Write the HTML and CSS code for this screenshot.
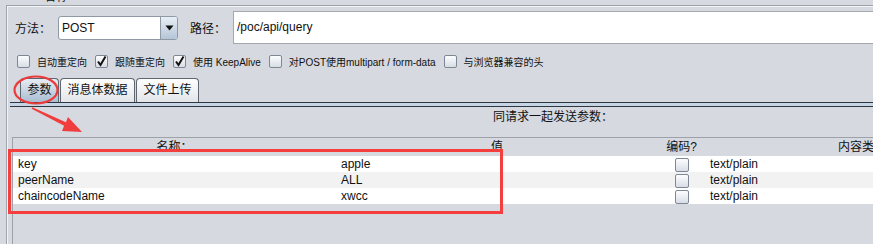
FILE: index.html
```html
<!DOCTYPE html>
<html lang="zh-CN">
<head>
  <meta charset="UTF-8">
  <title>HTTP请求</title>
  <link rel="stylesheet" href="styles.css">
</head>
<body>

  <div class="caption">名称</div>

  <div class="frame">

    <!-- Method / Path -->
    <div class="req-line">
      <span class="field-label">方法：</span>
      <div class="combo">
        <span class="combo-value">POST</span>
        <span class="combo-button">
          <svg width="9" height="6" viewBox="0 0 9 6"><polygon points="0.5,0.5 8.5,0.5 4.5,5.5" fill="#111"/></svg>
        </span>
      </div>
      <span class="field-label path-label">路径：</span>
      <div class="text-field">/poc/api/query</div>
    </div>

    <!-- Options -->
    <div class="options">
      <label class="option"><span class="check"></span>自动重定向</label>
      <label class="option"><span class="check"><svg width="11" height="11" viewBox="0 0 11 11"><path d="M2 5.5 L4.5 9 L9.5 0.5" fill="none" stroke="#111" stroke-width="2"/></svg></span>跟随重定向</label>
      <label class="option"><span class="check"><svg width="11" height="11" viewBox="0 0 11 11"><path d="M2 5.5 L4.5 9 L9.5 0.5" fill="none" stroke="#111" stroke-width="2"/></svg></span>使用 KeepAlive</label>
      <label class="option"><span class="check"></span>对POST使用multipart / form-data</label>
      <label class="option"><span class="check"></span>与浏览器兼容的头</label>
    </div>

    <!-- Tabs -->
    <div class="tabbed">
      <div class="tab-strip">
        <div class="tab selected">参数</div>
        <div class="tab">消息体数据</div>
        <div class="tab">文件上传</div>
      </div>
      <div class="tab-rule"></div>

      <div class="tab-body">
        <div class="params-title">同请求一起发送参数：</div>
        <div class="scroll-pane">
          <table class="params">
            <colgroup>
              <col class="col-name">
              <col class="col-value">
              <col class="col-enc">
              <col class="col-type">
            </colgroup>
            <thead>
              <tr>
                <th>名称：</th>
                <th>值</th>
                <th>编码?</th>
                <th>内容类型：</th>
              </tr>
            </thead>
            <tbody>
              <tr>
                <td>key</td>
                <td>apple</td>
                <td class="enc"><span class="check cell-check"></span></td>
                <td>text/plain</td>
              </tr>
              <tr>
                <td>peerName</td>
                <td>ALL</td>
                <td class="enc"><span class="check cell-check"></span></td>
                <td>text/plain</td>
              </tr>
              <tr>
                <td>chaincodeName</td>
                <td>xwcc</td>
                <td class="enc"><span class="check cell-check"></span></td>
                <td>text/plain</td>
              </tr>
            </tbody>
          </table>
        </div>
      </div>
    </div>

  </div>

  <!-- Annotation marks -->
  <svg class="marks" width="873" height="244" viewBox="0 0 873 244">
    <ellipse cx="36" cy="90" rx="21.5" ry="13.5" fill="none" stroke="#ec3b3b" stroke-width="2.2"/>
    <polygon points="32.4,107.2 65.9,122.2 68,117 82,132 62,131 64.1,125.8 31.6,108.8" fill="#f03e3e"/>
    <rect x="9.5" y="150.5" width="492" height="62" fill="none" stroke="#f53f3f" stroke-width="3"/>
  </svg>

</body>
</html>
```

FILE: styles.css
```css
body {
  margin: 0;
  width: 873px;
  height: 244px;
  overflow: hidden;
  position: relative;
  background: #d6d9df;
  font-family: "Liberation Sans", "Noto Sans CJK SC", sans-serif;
  font-size: 12px;
  color: #111;
}

/* cut-off caption above the frame */
.caption {
  height: 12px;
  line-height: 12px;
  margin: -9px 0 2px 44px;
}

.frame {
  margin-left: 6px;
  width: 1100px;
  height: 300px;
  border-top: 1px solid #9fa3aa;
  border-left: 1px solid #9fa3aa;
  box-shadow: inset 1px 1px 0 #f3f4f6;
}

/* Method / Path row */
.req-line {
  display: flex;
  align-items: center;
  height: 33px;
  margin-top: 5px;
  padding-left: 8px;
}

.field-label {
  width: 43px;
  flex: none;
}

.path-label {
  margin-left: 12px;
}

.combo {
  display: flex;
  width: 120px;
  height: 24px;
  box-sizing: border-box;
  border: 1px solid #8e99a5;
  border-radius: 3px;
  background: #fff;
  flex: none;
}

.combo-value {
  flex: 1;
  padding-left: 3px;
  line-height: 22px;
}

.combo-button {
  width: 16px;
  display: flex;
  align-items: center;
  justify-content: center;
  border-left: 1px solid #8e99a5;
  border-radius: 0 2px 2px 0;
  background: linear-gradient(#e8eef5, #b4c5d7);
}

.text-field {
  width: 700px;
  height: 33px;
  box-sizing: border-box;
  flex: none;
  border: 1px solid #a4a8ae;
  background: #fff;
  padding-left: 3px;
  line-height: 31px;
}

/* Option checkboxes */
.options {
  display: flex;
  align-items: center;
  height: 14px;
  margin-top: 10px;
  padding-left: 10px;
  font-size: 10px;
}

.option {
  display: flex;
  align-items: center;
  gap: 7px;
  margin-right: 8px;
  white-space: nowrap;
}

.check {
  width: 13px;
  height: 13px;
  box-sizing: border-box;
  display: inline-flex;
  align-items: center;
  justify-content: center;
  border: 1px solid #7e8894;
  border-radius: 2px;
  background: linear-gradient(#fcfdfe, #d8dee6);
}

/* Tabs */
.tabbed {
  width: 1084px;
  margin-top: 10px;
  margin-left: 3px;
}

.tab-strip {
  display: flex;
  gap: 1px;
  height: 24px;
  padding-left: 10px;
}

.tab {
  height: 24px;
  box-sizing: border-box;
  padding: 0 6.5px;
  border: 1px solid #5f6670;
  border-bottom: none;
  border-radius: 4px 4px 0 0;
  background: linear-gradient(#fefefe, #e2e5e9);
  line-height: 22px;
}

.tab.selected {
  background: linear-gradient(#e6ecf3, #a9bdd2);
}

.tab-rule {
  height: 3px;
  background: #c6d5e5;
  border-top: 1px solid #2f3640;
  border-bottom: 1px solid #2f3640;
}

.tab-body {
  padding-left: 2px;
}

.params-title {
  height: 14px;
  line-height: 14px;
  margin-top: 3px;
  text-align: center;
}

.scroll-pane {
  margin-top: 13px;
  border-top: 1px solid #9da2a9;
  border-left: 1px solid #9da2a9;
  height: 120px;
}

/* Parameter table */
.params {
  border-collapse: collapse;
  table-layout: fixed;
  width: 1018px;
}

.col-name { width: 323px; }
.col-value { width: 322px; }
.col-enc { width: 47px; }
.col-type { width: 326px; }

.params th {
  height: 18px;
  padding: 0;
  font-weight: normal;
  line-height: 18px;
  text-align: center;
}

.params td {
  height: 16px;
  padding: 0 5px;
  line-height: 16px;
  white-space: nowrap;
  background: #fff;
}

.params tbody tr:nth-child(even) td {
  background: #f2f2f2;
}

.params tbody td.enc {
  background: #fff;
  padding: 0;
  text-align: center;
}

.cell-check {
  width: 14px;
  height: 14px;
  vertical-align: middle;
}

/* Annotation overlay */
.marks {
  position: absolute;
  left: 0;
  top: 0;
  pointer-events: none;
}
```
